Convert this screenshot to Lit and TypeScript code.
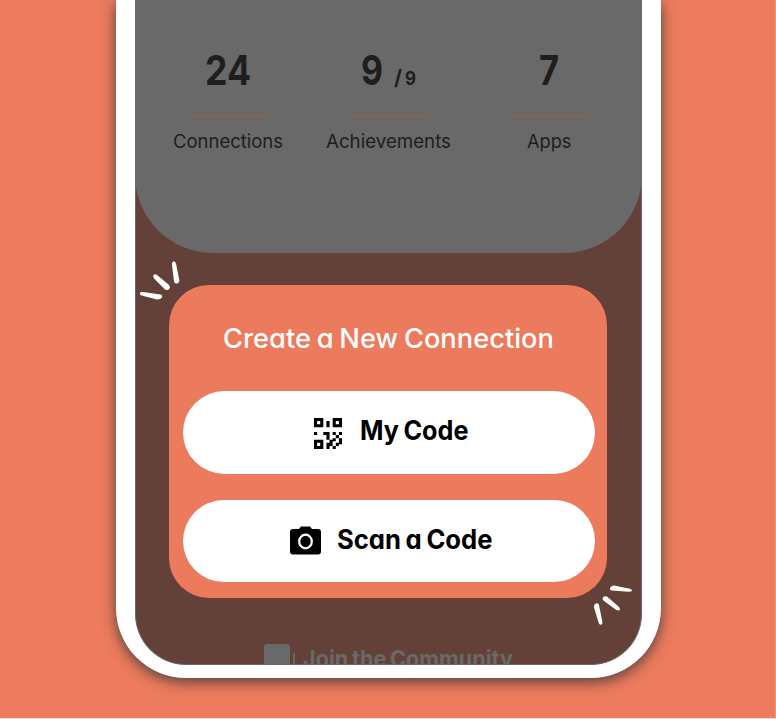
import { LitElement, html, svg, css } from "lit";
import { customElement, property } from "lit/decorators.js";

/** A line of text set to a given width, standing on a given baseline. */
@customElement("fit-text")
class FitText extends LitElement {
  @property() text = "";
  @property({ type: Number }) w = 100;
  @property({ type: Number }) h = 30;
  @property({ type: Number }) base = 24;
  @property({ type: Number }) size = 20;
  @property({ type: Number }) weight = 400;
  static styles = css`
    :host { display: block; flex: none; }
    svg { display: block; overflow: visible; fill: currentColor; }
    text { font-family: Inter, "Open Sans", sans-serif; font-feature-settings: "cv11"; word-spacing: -1.5px; }
  `;
  render() {
    return html`<svg width=${this.w} height=${this.h}>
      <text x="0" y=${this.base} font-size=${this.size} font-weight=${this.weight}
        textLength=${this.w} lengthAdjust="spacingAndGlyphs">${this.text}</text>
    </svg>`;
  }
}

@customElement("app-root")
class AppRoot extends LitElement {
  static styles = css`
    :host { display: block; }
    .page {
      box-sizing: border-box; width: 776px; height: 719px; overflow: hidden;
      background: #ed7b5d; border-right: 1px solid #f1947c; border-bottom: 1px solid #fbe3dd;
      padding-left: 115.5px;
    }
    .phone {
      box-sizing: border-box; width: 545.5px; height: 678px; background: #fff;
      border-radius: 0 0 70px 70px; padding: 0 19px 13px;
      box-shadow: 0 4px 14px rgba(55, 55, 55, .85);
    }
    .screen {
      box-sizing: border-box; width: 507.5px; height: 665px; overflow: hidden; position: relative;
      background: #644138; border: 1px solid #6b6765; border-top: 0;
      border-radius: 0 0 51px 51px; display: flex; flex-direction: column; align-items: center;
    }
    .stats {
      box-sizing: border-box; flex: none; width: 507.5px; height: 252.5px; background: #696969;
      border-radius: 0 0 78px 78px; color: #1e1e1e;
      display: grid; grid-template-columns: repeat(3, 160.7px); justify-content: center;
    }
    .stat { display: flex; flex-direction: column; align-items: center; }
    .nums { display: flex; height: 115px; }
    .gap { width: 11px; }
    .gap.small { width: 3px; }
    .rule { width: 79px; height: 2px; background: #8f6052; }
    .modal {
      box-sizing: border-box; flex: none; width: 438px; height: 313px; margin-top: 32.5px;
      background: #ec7a5c; border-radius: 40px; display: flex; flex-direction: column; align-items: center;
      color: #fff;
    }
    .title { flex: none; height: 106px; padding-left: 1px; }
    .btn {
      flex: none; width: 411.5px; height: 82.5px; margin-bottom: 26px; border-radius: 42px;
      background: #fff; color: #000; display: flex; justify-content: center;
      margin-left: 1px; box-sizing: border-box; padding-left: 4px;
    }
    .btn svg { display: block; flex: none; }
    .qr { margin: 27px 18px 0 0; }
    .cam { margin: 26.5px 16px 0 0; }
    .join { display: flex; margin-top: 46px; color: #696969; }
    .block { width: 26px; height: 30px; border-radius: 3px; background: #696969; }
    .bar { width: 2px; height: 20px; margin: 9px 8px 0 3px; background: #696969; }
    .spark { position: absolute; fill: #fff; display: block; }
    .one { left: 2.5px; top: 260px; }
    .two { left: 455.5px; top: 582px; }
  `;
  private stat(label: string, w: number, nums: unknown) {
    return html`<div class="stat">
      <div class="nums">${nums}</div>
      <div class="rule"></div>
      <fit-text .text=${label} .w=${w} .h=${40} .base=${30.5} .size=${18.7}></fit-text>
    </div>`;
  }
  private num(text: string, w: number, size = 41) {
    return html`<fit-text .text=${text} .w=${w} .h=${115} .base=${84.6} .size=${size} .weight=${700}></fit-text>`;
  }
  render() {
    return html`<div class="page"><div class="phone"><div class="screen">
      <div class="stats">
        ${this.stat("Connections", 110, this.num("24", 46))}
        ${this.stat("Achievements", 125, html`${this.num("9", 22)}<div class="gap"></div>${this.num("/", 8, 21)}<div class="gap small"></div>${this.num("9", 11, 18.5)}`)}
        ${this.stat("Apps", 44.5, this.num("7", 20))}
      </div>
      <div class="modal">
        <div class="title"><fit-text .text=${"Create a New Connection"} .w=${331} .h=${100} .base=${62.5} .size=${27} .weight=${500}></fit-text></div>
        <div class="btn">
          <svg class="qr" width="28" height="31" viewBox="0 0 18 20" preserveAspectRatio="none">
            ${svg`<path fill-rule="evenodd" d="M0 0h6v6H0zM2 2v2h2V2zM12 0h6v6h-6zM14 2v2h2V2zM0 14h6v6H0zM2 16v2h2v-2zM8 2h2v4H8zM0 9h2v2H0zM6 9h4v5H8v-3H6zM12 9h2v2h-2zM16 9h2v2h-2zM14 11h2v2h-2zM12 13h2v2h-2zM16 13h2v4h-2zM8 16h2v-2h2v4h-2v2H8zM14 16h2v2h-2zM12 18h2v2h-2z"/>`}
          </svg>
          <fit-text .text=${"My Code"} .w=${108.5} .h=${82} .base=${49.3} .size=${26.5} .weight=${700}></fit-text>
        </div>
        <div class="btn">
          <svg class="cam" width="31" height="29" viewBox="0 0 31 29">
            <path d="M3 3h6l2-2.500h9L22 3h6q3 0 3 3v19.500q0 3-3 3H3q-3 0-3-3V6q0-3 3-3z"/>
            <ellipse cx="15.500" cy="15.500" rx="6.300" ry="6.800" fill="none" stroke="#fff" stroke-width="2.200"/>
          </svg>
          <fit-text .text=${"Scan a Code"} .w=${155.5} .h=${82} .base=${49} .size=${26.5} .weight=${700}></fit-text>
        </div>
      </div>
      <div class="join">
        <div class="block"></div><div class="bar"></div>
        <fit-text .text=${"Join the Community"} .w=${210} .h=${30} .base=${22.8} .size=${22.5} .weight=${700}></fit-text>
      </div>
      <svg class="spark one" width="44" height="42" viewBox="138 260 44 42">
        <path d="M140.500 292.200Q138.800 294.500 141.500 295.500L156 299.300Q160 300 162 297.500Q162.800 294.800 160.500 294.500L143 292Q141 291.800 140.500 292.200z"/>
        <path d="M153.500 275Q152.500 277 154.500 279L165 289.500Q168 291 169.500 288.500Q170.500 286.500 168.500 284.500L157 275Q155 273.500 153.500 275z"/>
        <path d="M173.500 261.500Q171.500 262 172 265L174 281.500Q174.500 284 177 283.500Q179.700 282.500 179.300 280L176 263.500Q175.300 261.200 173.500 261.500z"/>
      </svg>
      <svg class="spark two" width="44" height="45" viewBox="591 582 44 45">
        <path d="M610 588Q611 585.500 614 585.500L630 588.800Q632.500 589.500 631.800 591Q631 592 628.500 591.800L612 590.500Q609.500 590 610 588z"/>
        <path d="M603 597.500Q604.500 595.500 607 596.500L619 607Q620.800 609 619.500 610.200Q618.200 611 616 609.800L604 601Q601.800 599.300 603 597.500z"/>
        <path d="M594.500 604.500Q597.800 601.800 599 605L602.300 621.500Q602.800 624.500 600.800 624.800Q599.200 624.800 598.500 622.500L594.200 608Q593.500 606 594.500 604.500z"/>
      </svg>
    </div></div></div>`;
  }
}
